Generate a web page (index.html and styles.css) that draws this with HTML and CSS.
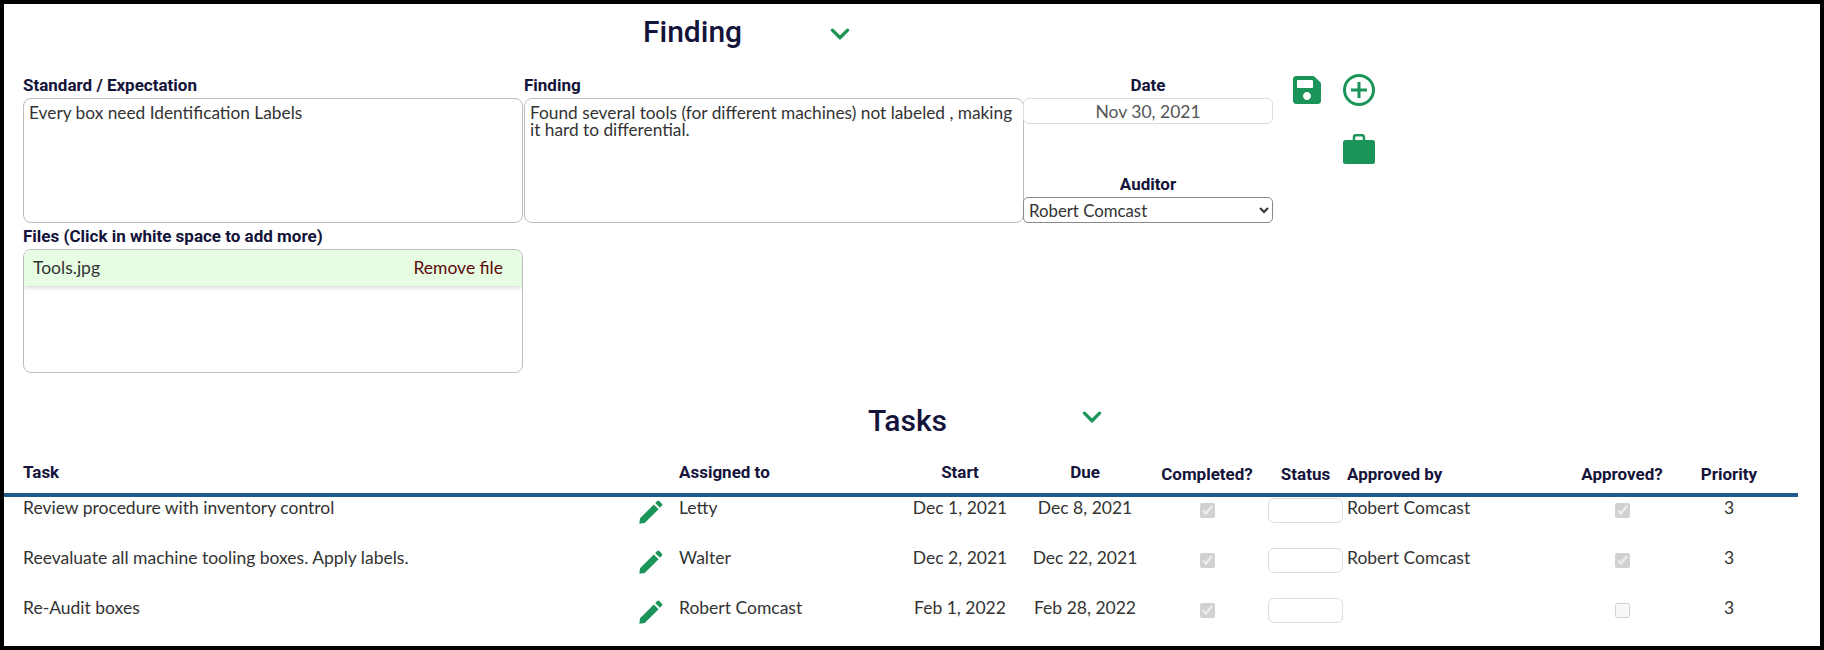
FILE: index.html
```html
<!DOCTYPE html>
<html lang="en">
<head>
<meta charset="utf-8">
<title>Finding</title>
<link rel="stylesheet" href="styles.css">
</head>
<body>
<main class="frame">
  <header class="title-row finding-title">
    <h1 class="title">Finding</h1>
    <svg class="chevron" viewBox="0 0 18 12"><path d="M2 2l7 7 7-7"/></svg>
  </header>

  <section class="form-grid">
    <div class="field">
      <label class="label">Standard / Expectation</label>
      <textarea class="area">Every box need Identification Labels</textarea>
    </div>
    <div class="field">
      <label class="label">Finding</label>
      <textarea class="area">Found several tools (for different machines) not labeled , making it hard to differential.</textarea>
    </div>
    <div class="side">
      <div class="side-field">
        <label class="label centered">Date</label>
        <input class="date" type="text" value="Nov 30, 2021">
      </div>
      <div class="side-field">
        <label class="label centered">Auditor</label>
        <select class="auditor"><option>Robert Comcast</option></select>
      </div>
    </div>
    <div class="actions">
      <svg class="icon-save" viewBox="0 0 448 512"><path d="M433.941 129.941l-83.882-83.882A48 48 0 0 0 316.118 32H48C21.49 32 0 53.49 0 80v352c0 26.51 21.49 48 48 48h352c26.51 0 48-21.49 48-48V163.882a48 48 0 0 0-14.059-33.941zM224 416c-35.346 0-64-28.654-64-64 0-35.346 28.654-64 64-64s64 28.654 64 64c0 35.346-28.654 64-64 64zm96-304.52V212c0 6.627-5.373 12-12 12H76c-6.627 0-12-5.373-12-12V108c0-6.627 5.373-12 12-12h228.52c3.183 0 6.235 1.264 8.485 3.515l3.48 3.48A11.996 11.996 0 0 1 320 111.48z"/></svg>
      <svg class="icon-plus" viewBox="0 0 32 32"><circle cx="16" cy="16" r="14.5"/><path d="M16 8v16M8 16h16"/></svg>
      <svg class="icon-case" viewBox="0 0 32 30"><path class="handle" d="M11 7V3.200a2 2 0 0 1 2-2h6a2 2 0 0 1 2 2V7"/><rect y="6" width="32" height="24" rx="2.500"/></svg>
    </div>
    <div class="field files">
      <label class="label">Files (Click in white space to add more)</label>
      <div class="dropzone">
        <div class="file-row"><span>Tools.jpg</span><span class="remove">Remove file</span></div>
      </div>
    </div>
  </section>

  <header class="title-row tasks-title">
    <h2 class="title">Tasks</h2>
    <svg class="chevron" viewBox="0 0 18 12"><path d="M2 2l7 7 7-7"/></svg>
  </header>

  <section class="tasks">
    <div class="row head">
      <span>Task</span><span></span><span>Assigned to</span><span class="c">Start</span><span class="c">Due</span>
      <span class="c low">Completed?</span><span class="c low">Status</span><span class="low">Approved by</span><span class="c low">Approved?</span><span class="c low">Priority</span>
    </div>
    <div class="row">
      <span>Review procedure with inventory control</span>
      <svg class="pencil" viewBox="0 0 24 24"><path d="M.3 23.700l.7-5.400L14.800 4.500l4.800 4.800L5.700 23zM16.200 3.100l2-2a1.500 1.500 0 0 1 2.100 0l2.600 2.600a1.500 1.500 0 0 1 0 2.100l-2 2z"/></svg>
      <span>Letty</span><span class="c">Dec 1, 2021</span><span class="c">Dec 8, 2021</span>
      <span class="c"><input type="checkbox" checked disabled></span><span class="c"><input class="status" type="text"></span>
      <span>Robert Comcast</span><span class="c"><input type="checkbox" checked disabled></span><span class="c">3</span>
    </div>
    <div class="row">
      <span>Reevaluate all machine tooling boxes. Apply labels.</span>
      <svg class="pencil" viewBox="0 0 24 24"><path d="M.3 23.700l.7-5.400L14.800 4.500l4.800 4.800L5.700 23zM16.200 3.100l2-2a1.500 1.500 0 0 1 2.100 0l2.600 2.600a1.500 1.500 0 0 1 0 2.100l-2 2z"/></svg>
      <span>Walter</span><span class="c">Dec 2, 2021</span><span class="c">Dec 22, 2021</span>
      <span class="c"><input type="checkbox" checked disabled></span><span class="c"><input class="status" type="text"></span>
      <span>Robert Comcast</span><span class="c"><input type="checkbox" checked disabled></span><span class="c">3</span>
    </div>
    <div class="row">
      <span>Re-Audit boxes</span>
      <svg class="pencil" viewBox="0 0 24 24"><path d="M.3 23.700l.7-5.400L14.800 4.500l4.800 4.800L5.700 23zM16.200 3.100l2-2a1.500 1.500 0 0 1 2.100 0l2.600 2.600a1.500 1.500 0 0 1 0 2.100l-2 2z"/></svg>
      <span>Robert Comcast</span><span class="c">Feb 1, 2022</span><span class="c">Feb 28, 2022</span>
      <span class="c"><input type="checkbox" checked disabled></span><span class="c"><input class="status" type="text"></span>
      <span></span><span class="c"><input type="checkbox" disabled></span><span class="c">3</span>
    </div>
  </section>
</main>
</body>
</html>
```
FILE: styles.css
```css
* { box-sizing: border-box; }
html, body { margin: 0; height: 100%; background: #fff; }
body { font-family: Lato, "Liberation Sans", sans-serif; font-size: 17.500px; color: #333; overflow: hidden; }
.frame { width: 1824px; height: 650px; border: 4px solid #000; }

.title-row { display: flex; align-items: center; height: 54px; }
.finding-title { padding-left: 639px; gap: 88px; }
.tasks-title { padding-left: 864px; gap: 135px; margin-top: 20px; }
.title { margin: 0; font-family: Roboto, sans-serif; font-weight: 500; font-size: 30px; color: #14143a; }
.chevron { width: 20px; height: 13px; fill: none; stroke: #1b9459; stroke-width: 3; stroke-linecap: round; stroke-linejoin: round; }
.finding-title .chevron { margin-top: 6px; }
.tasks-title .chevron { margin-top: -6px; }

.form-grid { display: grid; grid-template-columns: 500px 500px 249px 120px; grid-template-rows: 151px 147px; column-gap: 1px; padding-left: 19px; margin-top: 17px; }
.field { display: flex; flex-direction: column; }
.label { font-family: Roboto, sans-serif; font-weight: 700; font-size: 17px; line-height: 20px; color: #14143a; margin-bottom: 3px; }
.centered { text-align: center; display: block; }
.area { width: 100%; height: 125px; border: 1px solid #bdbdbd; border-radius: 8px; padding: 5px 2px 3px 5px; font: 17.300px/17px Lato, sans-serif; color: #333; resize: none; outline: none; display: block; overflow: hidden; }
.side { display: flex; flex-direction: column; justify-content: space-between; height: 148px; margin-left: -2px; width: 250px; }
.side-field { display: flex; flex-direction: column; }
.date { height: 26px; width: 100%; border: 1px solid #ddd; border-radius: 6px; text-align: center; font: 17.500px Lato, sans-serif; color: #555; padding: 0; outline: none; }
.auditor { height: 26px; width: 100%; border: 1px solid #8a8a8a; border-radius: 5px; background: #fff; font: 16.800px Lato, sans-serif; color: #333; padding: 0 0 0 1px; }
.actions { display: grid; grid-template-columns: 32px 32px; column-gap: 18px; row-gap: 28px; padding-left: 18px; align-content: start; margin-top: -1px; }
.actions svg { fill: #1b9459; display: block; }
.icon-save { width: 30px; height: 32px; margin-left: -1px; }
.icon-plus { width: 32px; height: 32px; }
.icon-plus circle, .icon-plus path { fill: none; stroke: #1b9459; stroke-width: 3; }
.icon-case { grid-column: 2; width: 32px; height: 30px; }
.icon-case .handle { fill: none; stroke: #1b9459; stroke-width: 2.500; }
.files { grid-column: 1; }
.dropzone { height: 125px; border: 1px solid #bdbdbd; border-radius: 8px; overflow: hidden; }
.file-row { height: 36px; background: #e6fde3; display: flex; justify-content: space-between; align-items: center; padding: 0 19px 2px 9px; box-shadow: 0 2px 4px rgba(0,0,0,.15); color: #333; }
.remove { color: #5c0a0a; }

.tasks { padding-right: 22px; }
.row { display: grid; grid-template-columns: 614px 42px 221px 120px 130px 114px 83px 213px 124px 90px; height: 50px; padding-left: 19px; align-items: center; color: #333; }
.row > span { align-self: start; padding-top: 1px; line-height: 20px; white-space: nowrap; }
.head { border-bottom: 4px solid #1f5a8a; font-family: Roboto, sans-serif; font-weight: 700; font-size: 17px; color: #14143a; }
.head > span { padding-top: 15px; }
.head > .low { padding-top: 17px; }
.c { text-align: center; }
.pencil { width: 24px; height: 24px; fill: #1b9459; align-self: start; margin-top: 3px; margin-left: 2px; }
.status { width: 75px; height: 25px; border: 1px solid #ddd; border-radius: 6px; outline: none; display: block; margin: 1px auto 0; }
.row input[type=checkbox] { margin: 0; width: 15px; height: 15px; vertical-align: middle; }
.row > span.c:has(input) { padding-top: 0; }
.row > span.c:has(input[type=checkbox]) { padding-top: 2px; }
```
